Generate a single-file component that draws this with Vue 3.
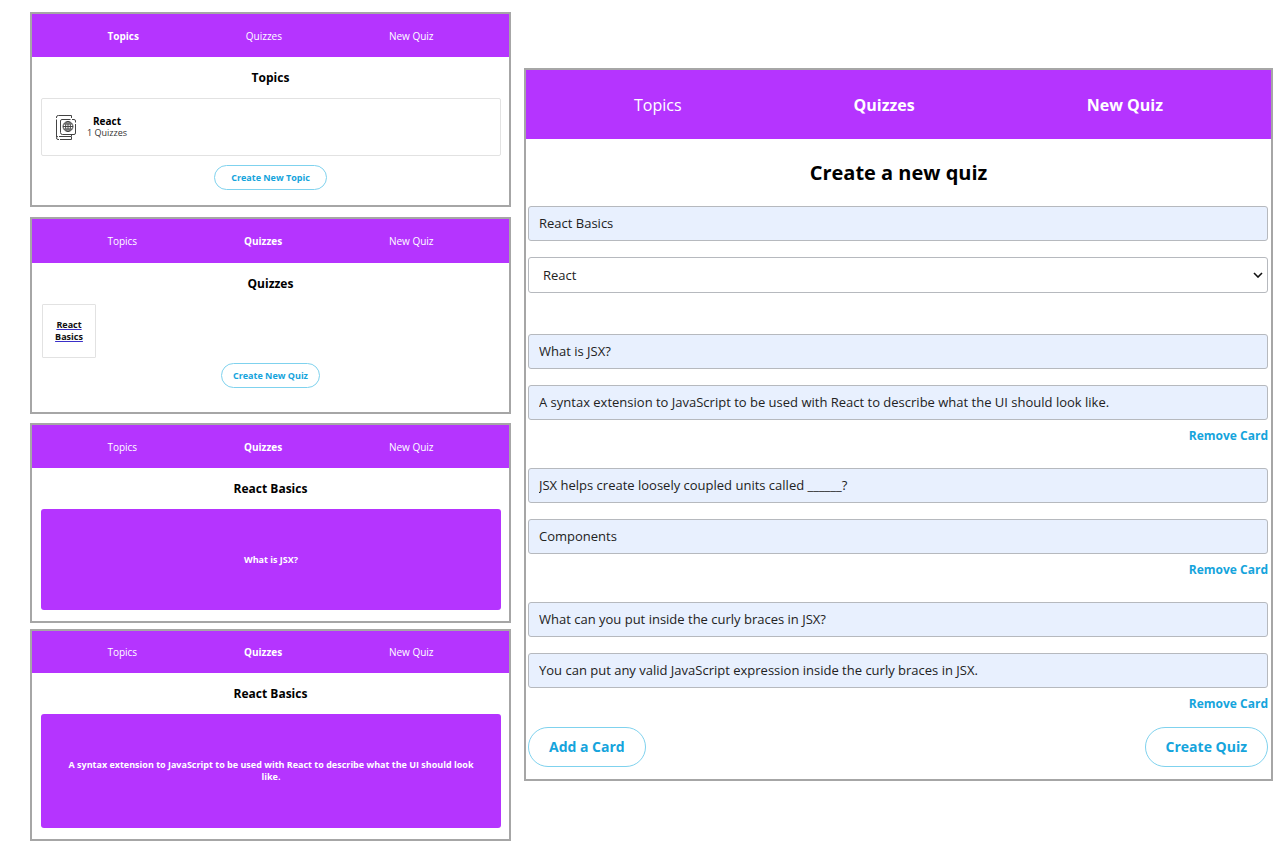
<script setup>
import { ref } from 'vue'

const navItems = ['Topics', 'Quizzes', 'New Quiz']

const quizName = ref('React Basics')
const topic = ref('React')
const cards = ref([
  {
    front: 'What is JSX?',
    back: 'A syntax extension to JavaScript to be used with React to describe what the UI should look like.',
  },
  {
    front: 'JSX helps create loosely coupled units called ______?',
    back: 'Components',
  },
  {
    front: 'What can you put inside the curly braces in JSX?',
    back: 'You can put any valid JavaScript expression inside the curly braces in JSX.',
  },
])

function addCard() {
  cards.value.push({ front: '', back: '' })
}
function removeCard(index) {
  cards.value.splice(index, 1)
}
</script>

<template>
  <main class="board">
    <div class="column">
      <section class="panel topics">
        <nav class="nav">
          <a v-for="item in navItems" :key="item" href="#" :class="{ active: item === 'Topics' }">{{ item }}</a>
        </nav>
        <h2>Topics</h2>
        <a href="#" class="topic-card">
          <svg class="book" viewBox="0 0 22 27" fill="none" stroke="#444" stroke-width="1">
            <path d="M16.5 4V1.5H3.5Q1.5 1.5 1.5 3V4M1.5 5.5V23" />
            <path d="M16.5 21V22.5H4M16.5 23V25.5H5M4 25.500H3Q1.500 25.500 1.500 23.800Q1.500 22.500 3 22.500" />
            <path d="M15.500 5.500H7Q5.500 5.500 5.500 7V18.500Q5.500 20.500 7.500 20.500H19Q20.500 20.500 20.500 19V10M20.500 8.500V7Q20.500 5.500 19 5.500H17" />
            <circle cx="13" cy="12.500" r="5" />
            <ellipse cx="13" cy="12.500" rx="2.400" ry="5" />
            <path d="M13 7.500V17.500M8 12.500H18M9 10H17M9 15H17" />
          </svg>
          <span class="topic-text">
            <strong>React</strong>
            <span>1 Quizzes</span>
          </span>
        </a>
        <button type="button" class="pill">Create New Topic</button>
      </section>

      <section class="panel quizzes">
        <nav class="nav">
          <a v-for="item in navItems" :key="item" href="#" :class="{ active: item === 'Quizzes' }">{{ item }}</a>
        </nav>
        <h2>Quizzes</h2>
        <a href="#" class="quiz-tile">React Basics</a>
        <button type="button" class="pill">Create New Quiz</button>
      </section>

      <section class="panel question">
        <nav class="nav">
          <a v-for="item in navItems" :key="item" href="#" :class="{ active: item === 'Quizzes' }">{{ item }}</a>
        </nav>
        <h2>React Basics</h2>
        <button type="button" class="flashcard">What is JSX?</button>
      </section>

      <section class="panel answer">
        <nav class="nav">
          <a v-for="item in navItems" :key="item" href="#" :class="{ active: item === 'Quizzes' }">{{ item }}</a>
        </nav>
        <h2>React Basics</h2>
        <button type="button" class="flashcard">
          A syntax extension to JavaScript to be used with React to describe what the UI should look like.
        </button>
      </section>
    </div>

    <section class="panel large">
      <nav class="nav">
        <a v-for="item in navItems" :key="item" href="#" :class="{ active: item !== 'Topics' }">{{ item }}</a>
      </nav>
      <h1>Create a new quiz</h1>
      <form @submit.prevent>
        <input v-model="quizName" type="text" aria-label="Quiz title" />
        <div class="select-wrap">
          <select v-model="topic" aria-label="Topic">
            <option>React</option>
          </select>
          <svg class="chevron" viewBox="0 0 10 6" fill="none" stroke="#111" stroke-width="1.6">
            <path d="M1 1L5 5L9 1" />
          </svg>
        </div>
        <div class="cards">
          <div v-for="(card, i) in cards" :key="i" class="card-fields">
            <input v-model="card.front" type="text" :aria-label="`Card ${i + 1} front`" />
            <input v-model="card.back" type="text" :aria-label="`Card ${i + 1} back`" />
            <button type="button" class="remove" @click="removeCard(i)">Remove Card</button>
          </div>
        </div>
        <div class="actions">
          <button type="button" class="pill" @click="addCard">Add a Card</button>
          <button type="submit" class="pill">Create Quiz</button>
        </div>
      </form>
    </section>
  </main>
</template>

<style>
body {
  background: #fff;
}
</style>

<style scoped>
* {
  box-sizing: border-box;
}
.board {
  display: grid;
  grid-template-columns: minmax(0, 481fr) minmax(0, 749fr);
  column-gap: 13px;
  align-items: start;
  padding: 12px 7px 8px 30px;
  font-family: "Open Sans", "Noto Sans", sans-serif;
  color: #000;
}
button,
input,
select {
  margin: 0;
  font-family: inherit;
}
button {
  cursor: pointer;
}
.panel {
  display: flex;
  flex-direction: column;
  border: 2px solid #a6a6a6;
  background: #fff;
  font-size: 9px;
}
.nav {
  display: flex;
  justify-content: space-around;
  align-items: center;
  height: 43px;
  padding: 0 22px;
  background: #b534ff;
  font-size: 10px;
}
.nav a {
  color: #fff;
  text-decoration: none;
}
.nav a.active {
  font-weight: 700;
}
h1,
h2 {
  margin: 0;
  text-align: center;
  font-weight: 700;
}
h2 {
  font-size: 12px;
  line-height: 41px;
}
.topics {
  padding-bottom: 15px;
}
.quizzes {
  margin-top: 10px;
  padding-bottom: 24px;
}
.quizzes .nav {
  height: 44px;
}
.question {
  margin-top: 9px;
  padding-bottom: 11px;
}
.answer {
  margin-top: 6px;
  padding-bottom: 11px;
}
.answer .nav {
  height: 42px;
}
.topic-card {
  display: flex;
  align-items: center;
  gap: 10px;
  height: 58px;
  margin: 0 8px 9px 9px;
  padding: 0 13px;
  border: 1px solid #e2e2e2;
  border-radius: 2px;
  color: #000;
  text-decoration: none;
}
.book {
  width: 22px;
  height: 27px;
}
.topic-text {
  display: flex;
  flex-direction: column;
  align-items: center;
  line-height: 12px;
  color: #333;
}
.topic-text strong {
  font-size: 10px;
  color: #000;
}
.pill {
  align-self: center;
  height: 25px;
  padding: 0 16px;
  border: 1px solid #7fd2ee;
  border-radius: 20px;
  background: #fff;
  color: #15a4dc;
  font-size: 9px;
  font-weight: 700;
}
.quizzes .pill {
  padding: 0 11px;
}
.quiz-tile {
  display: flex;
  align-items: center;
  width: 54px;
  height: 54px;
  margin: 0 0 5px 10px;
  padding: 0 8px;
  border: 1px solid #e2e2e2;
  border-radius: 1px;
  color: #111;
  font-weight: 700;
  line-height: 12px;
  text-align: center;
  text-decoration: underline;
  text-decoration-color: #3a2fc8;
}
.flashcard {
  height: 101px;
  margin: 0 8px 0 9px;
  padding: 0 26px;
  border: 0;
  border-radius: 3px;
  background: #b534ff;
  color: #fff;
  font-size: 9px;
  font-weight: 700;
  line-height: 12px;
}
.answer .flashcard {
  height: 114px;
}
.large {
  margin-top: 56px;
}
.large .nav {
  height: 69px;
  font-size: 16px;
}
h1 {
  font-size: 20px;
  line-height: 67px;
}
form {
  display: flex;
  flex-direction: column;
  gap: 16px;
  padding: 0 3px 12px 2px;
}
input,
select {
  width: 100%;
  height: 35px;
  padding: 0 10px 2px;
  border: 1px solid #b6b9be;
  border-radius: 3px;
  background: #e8f0fe;
  color: #222;
  font-size: 13px;
}
.select-wrap {
  position: relative;
}
select {
  display: block;
  height: 36px;
  padding: 0 14px;
  background: #fff;
  appearance: none;
}
.chevron {
  position: absolute;
  top: 15px;
  right: 5px;
  width: 10px;
  height: 6px;
  pointer-events: none;
}
.cards {
  display: flex;
  flex-direction: column;
  gap: 17px;
  margin-top: 25px;
}
.card-fields {
  display: flex;
  flex-direction: column;
}
.card-fields input + input {
  margin-top: 16px;
}
.remove {
  align-self: flex-end;
  height: 31px;
  padding: 0;
  border: 0;
  background: none;
  color: #15a4dc;
  font-size: 12px;
  font-weight: 700;
}
.actions {
  display: flex;
  justify-content: space-between;
  margin-top: -8px;
}
.actions .pill {
  height: 40px;
  padding: 0 20px 2px;
  font-size: 14px;
}
</style>
